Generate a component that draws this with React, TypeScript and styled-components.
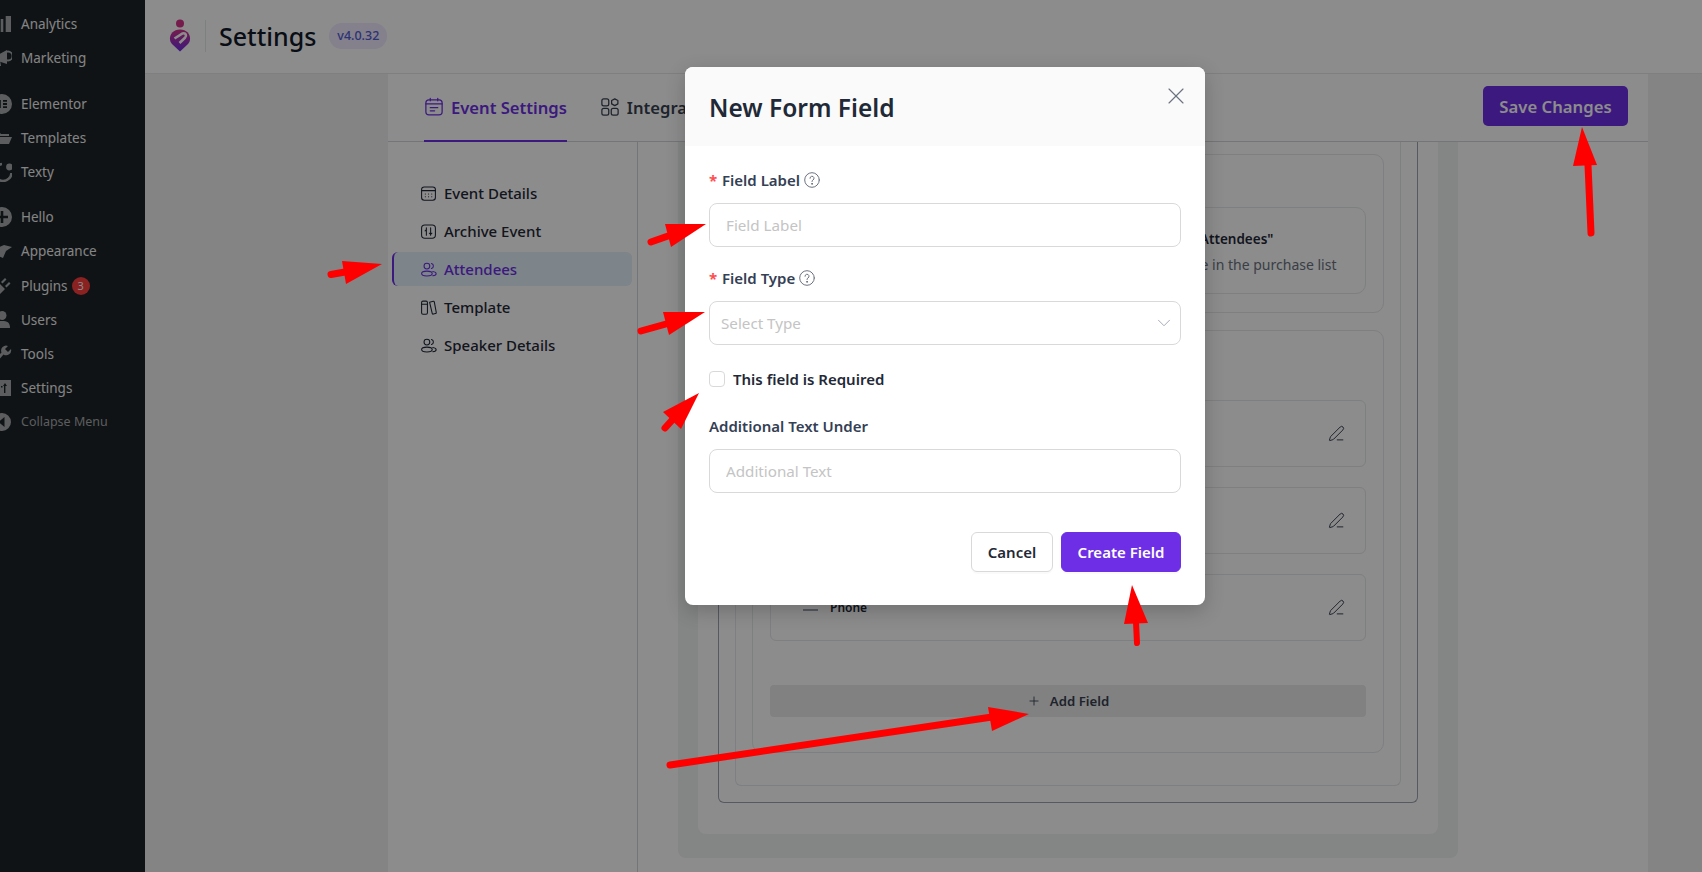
import React from 'react';
import styled, { createGlobalStyle } from 'styled-components';
import { ChevronDown, PenLine, Plus, X } from 'lucide-react';

const GlobalStyle = createGlobalStyle`
  html, body { margin: 0; padding: 0; height: 100%; overflow: hidden; }
  body { font-family: "Noto Sans", "Open Sans", sans-serif; background: #f0f0f1; color: #1f2937; }
  * { box-sizing: border-box; }
`;

const Page = styled.div`
  position: relative;
  display: flex;
  width: 1702px;
  height: 872px;
  overflow: hidden;
`;

/* admin sidebar */
const Sidebar = styled.nav`
  flex: 0 0 145px;
  background: #1d2327;
  padding-top: 7px;
  overflow: hidden;
`;

const MenuGroup = styled.div`
  margin-bottom: 10.8px;
  &:first-child { margin-bottom: 12px; }
`;

const MenuRow = styled.div<{ $muted?: boolean }>`
  display: flex;
  align-items: center;
  gap: 9px;
  height: 34.1px;
  margin-left: -8px;
  font-size: ${p => (p.$muted ? '12.5px' : '13.5px')};
  color: ${p => (p.$muted ? '#a7aaad' : '#f0f0f1')};
  svg { flex: 0 0 20px; }
`;

const Badge = styled.span`
  display: flex;
  align-items: center;
  justify-content: center;
  width: 18px;
  height: 18px;
  margin-left: -5px;
  border-radius: 50%;
  background: #fb3e3e;
  color: #fff;
  font-size: 11px;
`;

const Main = styled.div`
  flex: 1;
  display: flex;
  flex-direction: column;
  min-width: 0;
`;

const TopBar = styled.header`
  flex: 0 0 74px;
  display: flex;
  align-items: center;
  padding: 0 0 2px 24px;
  background: #fff;
  border-bottom: 1px solid #e5e7eb;
`;

const LogoSlot = styled.div`
  display: flex;
  align-items: center;
  height: 32px;
  padding-right: 14px;
  margin-right: 13px;
  border-right: 1px solid #e5e7eb;
`;

const Title = styled.h1`
  margin: 0;
  font-size: 25px;
  font-weight: 500;
  color: #111827;
`;

const Version = styled.span`
  display: flex;
  align-items: center;
  justify-content: center;
  width: 58px;
  height: 26px;
  margin-left: 13px;
  border-radius: 13px;
  background: #f0e9ff;
  color: #4f5bd5;
  font-size: 12.5px;
  font-weight: 500;
`;

const Panel = styled.section`
  flex: 1;
  display: flex;
  flex-direction: column;
  width: 1260px;
  margin-left: 243px;
  background: #fff;
  min-height: 0;
`;

const TabBar = styled.div`
  flex: 0 0 68px;
  display: flex;
  align-items: stretch;
  padding: 0 20px 0 36px;
  border-bottom: 1px solid #d1d5db;
`;

const Tab = styled.div<{ $active?: boolean }>`
  display: flex;
  align-items: center;
  gap: 7px;
  margin-right: 33px;
  margin-bottom: -1px;
  font-size: 16.6px;
  font-weight: 600;
  color: ${p => (p.$active ? '#6d2ee6' : '#374151')};
  border-bottom: 2px solid ${p => (p.$active ? '#6d2ee6' : 'transparent')};
`;

const SaveButton = styled.button`
  align-self: flex-start;
  width: 145px;
  height: 40px;
  margin: 12px 0 0 auto;
  border: 0;
  border-radius: 5px;
  background: #6d2ee6;
  color: #fff;
  font: 600 16.7px "Noto Sans", sans-serif;
`;

const PanelBody = styled.div`
  flex: 1;
  display: flex;
  min-height: 0;
  overflow: hidden;
`;

const SideNav = styled.aside`
  flex: 0 0 250px;
  padding: 34px 5px 0 4px;
  border-right: 1px solid #d1d5db;
  display: flex;
  flex-direction: column;
  gap: 4px;
`;

const NavItem = styled.div<{ $active?: boolean }>`
  display: flex;
  align-items: center;
  gap: 7px;
  height: 34px;
  padding-left: 26px;
  border-radius: 6px;
  font-size: 15px;
  font-weight: 500;
  color: ${p => (p.$active ? '#6d2ee6' : '#1f2937')};
  background: ${p => (p.$active ? '#e3f0fb' : 'transparent')};
  border-left: 2px solid ${p => (p.$active ? '#6d2ee6' : 'transparent')};
`;

const GreyCard = styled.div`
  flex: 0 0 780px;
  align-self: flex-start;
  height: 716px;
  margin-left: 40px;
  padding: 0 20px;
  background: #f1f2f3;
  border-radius: 0 0 8px 8px;
`;

const WhiteCard = styled.div`
  height: 692px;
  padding: 0 20px;
  background: #fff;
  border-radius: 0 0 8px 8px;
`;

const OuterFrame = styled.div`
  height: 661px;
  padding: 0 16px;
  border: 1px solid #9ca3af;
  border-top: 0;
  border-radius: 0 0 6px 6px;
`;

const InnerFrame = styled.div`
  height: 644px;
  padding: 12px 16px 0;
  border: 1px solid #e5e7eb;
  border-top: 0;
  border-radius: 0 0 6px 6px;
  display: flex;
  flex-direction: column;
  gap: 17px;
`;

const Section = styled.div<{ $top: number; $height: number }>`
  height: ${p => p.$height}px;
  padding: ${p => p.$top}px 17px 0;
  border: 1px solid #e5e7eb;
  border-radius: 10px;
`;

const OptionBox = styled.div`
  height: 87px;
  padding: 22px 0 0 273px;
  border: 1px solid #e5e7eb;
  border-radius: 10px;
  white-space: nowrap;
  overflow: hidden;
`;

const OptionTitle = styled.div`
  padding-left: 43px;
  font-size: 13.5px;
  font-weight: 600;
  color: #1f2937;
`;

const OptionHint = styled.div`
  margin-top: 7px;
  font-size: 14px;
  color: #6b7280;
`;

const FieldList = styled.div`
  display: flex;
  flex-direction: column;
  gap: 20px;
`;

const FieldRow = styled.div`
  display: flex;
  align-items: center;
  height: 67px;
  padding: 0 20px 0 32px;
  border: 1px solid #e5e7eb;
  border-radius: 6px;
`;

const DragHandle = styled.span`
  width: 15px;
  height: 2px;
  margin-top: 5px;
  margin-right: 12px;
  background: #9ca3af;
`;

const FieldName = styled.span`
  flex: 1;
  font-size: 12px;
  font-weight: 600;
  color: #1f2937;
`;

const AddField = styled.div`
  display: flex;
  align-items: center;
  justify-content: center;
  gap: 9px;
  height: 32px;
  margin-top: 44px;
  border-radius: 4px;
  background: #ebebeb;
  font-size: 13.2px;
  font-weight: 600;
  color: #374151;
`;

/* modal */
const Overlay = styled.div`
  position: absolute;
  inset: 0;
  padding: 67px 0 0 685px;
  background: rgba(0, 0, 0, 0.45);
`;

const Modal = styled.div`
  width: 520px;
  height: 538px;
  border-radius: 8px;
  background: #fff;
  overflow: hidden;
  box-shadow: 0 6px 20px rgba(0, 0, 0, 0.2);
`;

const ModalHead = styled.div`
  display: flex;
  align-items: flex-start;
  justify-content: space-between;
  height: 79px;
  padding: 22px 15px 0 24px;
  background: #fafafa;
`;

const ModalTitle = styled.h2`
  margin: 0;
  font-size: 24.5px;
  line-height: 38px;
  font-weight: 600;
  color: #1f2937;
`;

const CloseMark = styled.span`
  display: flex;
  margin-top: -7px;
  color: #6b7280;
`;

const ModalBody = styled.div`
  padding: 23px 24px 0;
`;

const Label = styled.label<{ $gap?: number }>`
  display: flex;
  align-items: center;
  gap: 4px;
  height: 22px;
  margin: ${p => p.$gap ?? 0}px 0 12px;
  font-size: 15px;
  font-weight: 600;
  color: #344054;
`;

const Star = styled.span`
  width: 9px;
  color: #ff4d4f;
  font-size: 15px;
  font-weight: 700;
`;

const TextInput = styled.input`
  display: block;
  width: 100%;
  height: 44px;
  padding: 0 16px;
  border: 1px solid #d9d9d9;
  border-radius: 8px;
  font: 15.2px "Noto Sans", sans-serif;
  &::placeholder { color: #c4c4c4; opacity: 1; }
`;

const SelectBox = styled.div`
  display: flex;
  align-items: center;
  justify-content: space-between;
  height: 44px;
  padding: 0 5px 0 11px;
  border: 1px solid #d9d9d9;
  border-radius: 8px;
  font-size: 15.2px;
  color: #c4c4c4;
`;

const CheckRow = styled.div`
  display: flex;
  align-items: center;
  gap: 8px;
  height: 22px;
  margin: 23px 0 25px;
  font-size: 15px;
  font-weight: 600;
  color: #1f2937;
`;

const CheckBox = styled.span`
  width: 16px;
  height: 16px;
  border: 1px solid #d9d9d9;
  border-radius: 4px;
  background: #fff;
`;

const Actions = styled.div`
  display: flex;
  justify-content: flex-end;
  gap: 8px;
  margin-top: 39px;
`;

const ActionButton = styled.button<{ $primary?: boolean }>`
  height: 40px;
  width: ${p => (p.$primary ? '120px' : '82px')};
  border: 1px solid ${p => (p.$primary ? '#6d2ee6' : '#d9d9d9')};
  border-radius: 6px;
  background: ${p => (p.$primary ? '#6d2ee6' : '#fff')};
  color: ${p => (p.$primary ? '#fff' : '#1f2937')};
  font: 600 15px "Noto Sans", sans-serif;
  box-shadow: 0 2px 0 rgba(0, 0, 0, 0.02);
`;

/* the red marks somebody drew on the screenshot */
const Annotations = styled.svg`
  position: absolute;
  inset: 0;
  pointer-events: none;
`;

const Line = (p: React.SVGProps<SVGPathElement>) => (
  <path fill="none" stroke="currentColor" strokeLinecap="round" strokeLinejoin="round" {...p} />
);

const adminIcons: Record<string, React.ReactNode> = {
  analytics: <><rect x="8.7" y="5" width="2.6" height="13" /><rect x="13.7" y="2" width="5.3" height="16" /></>,
  marketing: <><path d="M2 9 15 2v14L2 12z" /><path d="M4 12h4l1 6H6z" /><circle cx="16" cy="8" r="4.5" fill="none" stroke="#a7aaad" strokeWidth="1.8" /></>,
  elementor: <path fillRule="evenodd" d="M10 0a10 10 0 1 1 0 20 10 10 0 0 1 0-20zM7 6v8h1.8V6zm4 0v1.7h4V6zm0 3.1v1.8h4V9.1zm0 3.2V14h4v-1.7z" />,
  templates: <path d="M1 4h6l2 2h8v2H5l-3 8H1zM6 9h14l-3 7H3z" />,
  texty: <><path d="M10 2A8.500 8.500 0 1 0 19.500 11" fill="none" stroke="#a7aaad" strokeWidth="2.600" /><circle cx="17.500" cy="5" r="3.400" /></>,
  hello: <path fillRule="evenodd" d="M10 0a10 10 0 1 1 0 20 10 10 0 0 1 0-20zM8.700 4v4.700H4v2.600h4.700V16h2.600v-4.700H16V8.700H11.300V4z" />,
  appearance: <path d="M3 8 12 4l8 2-6 4-3 7-5-2-2-4zM12 5l5 2" />,
  plugins: <path d="M2 18l2-3-2-3 5-5 6 6-5 5-3-2zM9 6l4-4 1.500 1.500-4 4zM13 10l4-4 1.500 1.500-4 4z" />,
  users: <><circle cx="10" cy="5.500" r="4.500" /><path d="M2 18c0-6 3-7 8-7s8 1 8 7z" /></>,
  tools: <path d="M4 19 1.500 16.500l8-8A5 5 0 0 1 16 2l-3 3 3 3 3-3a5 5 0 0 1-7.500 5.500z" />,
  settings: <path fillRule="evenodd" d="M1 2h18v16H1zM7.500 8l-2-3-2 3h1.300v7h1.400V8zm4.500 0v7h1.400V8H15l-2-3-2 3zM9 8v1.500h1.500V8z" />,
  collapse: <path fillRule="evenodd" d="M10 1a9 9 0 1 1 0 18 9 9 0 0 1 0-18zm2.500 4-6 5 6 5z" />,
};

const AdminIcon = ({ name }: { name: string }) => (
  <svg width="20" height="20" viewBox="0 0 20 20" fill="#a7aaad">{adminIcons[name]}</svg>
);

const Glyph = ({ children, size = 16 }: { children: React.ReactNode; size?: number }) => (
  <svg width={size} height={size} viewBox="0 0 16 16" fill="none" stroke="currentColor" strokeWidth="1" strokeLinecap="round" strokeLinejoin="round">
    {children}
  </svg>
);

const PeopleGlyph = () => (
  <Glyph size={17}>
    <circle cx="6.500" cy="4.800" r="2.700" />
    <ellipse cx="6.500" cy="11.800" rx="5" ry="2.300" />
    <path d="M10.800 2.300a2.500 2.500 0 0 1 0 4.800M12 9.900c2 .3 3.200 1 3.200 2s-1.200 1.700-3.200 2" />
  </Glyph>
);

const Logo = () => (
  <svg width="22" height="33" viewBox="0 0 22 33">
    <defs>
      <linearGradient id="logoFill" x1="0" y1="0" x2="0" y2="1">
        <stop offset="0" stopColor="#d6338c" />
        <stop offset="1" stopColor="#6d2ee6" />
      </linearGradient>
    </defs>
    <circle cx="11" cy="4.500" r="4" fill="#d6338c" />
    <path d="M11 32.500 3 25C-1.500 20 1.500 10.500 11 10.500S23.500 20 19 25z" fill="url(#logoFill)" />
    <path d="M5.500 19.500 13.500 14.500c3.500-1 4.500 2.500 2.500 4.300L10.500 24" fill="none" stroke="#fff" strokeWidth="2.600" />
  </svg>
);

const QuestionMark = () => (
  <svg width="16" height="16" viewBox="0 0 16 16" fill="none" stroke="#6b7280" strokeLinecap="round">
    <circle cx="8" cy="8" r="7.300" />
    <path d="M6 6.300a2 2 0 1 1 3 1.700c-.7.400-1 .8-1 1.500" />
    <circle cx="8" cy="11.800" r=".5" fill="#6b7280" />
  </svg>
);

const menu = [
  [['analytics', 'Analytics'], ['marketing', 'Marketing']],
  [['elementor', 'Elementor'], ['templates', 'Templates'], ['texty', 'Texty']],
  [['hello', 'Hello'], ['appearance', 'Appearance'], ['plugins', 'Plugins'], ['users', 'Users'], ['tools', 'Tools'], ['settings', 'Settings']],
];

const navItems = [
  {
    title: 'Event Details',
    icon: (
      <Glyph size={17}>
        <rect x="1.500" y="1.800" width="13" height="12.500" rx="2.500" />
        <path d="M1.500 5.300h13M5 8.500h.1M8 8.500h.1M11 8.500h.1M5 11h.1M8 11h.1M11 11h.1" />
      </Glyph>
    ),
  },
  {
    title: 'Archive Event',
    icon: (
      <Glyph size={17}>
        <rect x="1.500" y="1.800" width="13" height="12.500" rx="3" />
        <path d="M6 4.500v7M10 4.500v7M4.800 7.500 6 6.300M10 10.800l1.200-1.200M8.800 9.600l1.200 1.200" />
      </Glyph>
    ),
  },
  { title: 'Attendees', active: true, icon: <PeopleGlyph /> },
  {
    title: 'Template',
    icon: (
      <Glyph size={17}>
        <rect x="1.500" y="2" width="5.500" height="12.300" rx="1.300" />
        <path d="M1.500 5h5.500M9 3l3.400-.8c.5-.1 1 .2 1.100.7l1.800 9.700c.1.500-.2 1-.7 1.100l-2 .5c-.5.1-1-.2-1.100-.7z" />
      </Glyph>
    ),
  },
  { title: 'Speaker Details', icon: <PeopleGlyph /> },
];

const fields = ['', '', 'Phone'];

export default function App() {
  return (
    <>
      <GlobalStyle />
      <Page>
        <Sidebar>
          {menu.map((group, i) => (
            <MenuGroup key={i}>
              {group.map(([icon, label]) => (
                <MenuRow key={label}>
                  <AdminIcon name={icon} />
                  {label}
                  {label === 'Plugins' && <Badge>3</Badge>}
                </MenuRow>
              ))}
              {i === 2 && (
                <MenuRow $muted>
                  <AdminIcon name="collapse" />
                  Collapse Menu
                </MenuRow>
              )}
            </MenuGroup>
          ))}
        </Sidebar>

        <Main>
          <TopBar>
            <LogoSlot><Logo /></LogoSlot>
            <Title>Settings</Title>
            <Version>v4.0.32</Version>
          </TopBar>

          <Panel>
            <TabBar>
              <Tab $active>
                <Glyph size={20}>
                  <rect x="1.500" y="2.200" width="13" height="12" rx="2.500" />
                  <path d="M1.500 5.500h13M5 1v2M11 1v2M5 8.500h6M5 11h3.500" />
                </Glyph>
                Event Settings
              </Tab>
              <Tab>
                <Glyph size={20}>
                  <rect x="1.500" y="1.500" width="5.500" height="5.500" rx="1.500" />
                  <path d="M11.800 1.500l2.500 1.300v2.700l-2.500 1.400-2.500-1.400V2.800z" />
                  <rect x="1.500" y="9" width="5.500" height="5.500" rx="1.500" />
                  <rect x="9" y="9" width="5.500" height="5.500" rx="1.500" />
                </Glyph>
                Integrations
              </Tab>
              <SaveButton>Save Changes</SaveButton>
            </TabBar>

            <PanelBody>
              <SideNav>
                {navItems.map(item => (
                  <NavItem key={item.title} $active={item.active}>
                    {item.icon}
                    {item.title}
                  </NavItem>
                ))}
              </SideNav>

              <GreyCard>
                <WhiteCard>
                  <OuterFrame>
                    <InnerFrame>
                      <Section $top={52} $height={159}>
                        <OptionBox>
                          <OptionTitle>Enable "Show All Attendees"</OptionTitle>
                          <OptionHint>Show the attendee name in the purchase list</OptionHint>
                        </OptionBox>
                      </Section>
                      <Section $top={69} $height={423}>
                        <FieldList>
                          {fields.map((name, i) => (
                            <FieldRow key={i}>
                              <DragHandle />
                              <FieldName>{name}</FieldName>
                              <PenLine size={17} strokeWidth={1.25} color="#1f2937" />
                            </FieldRow>
                          ))}
                        </FieldList>
                        <AddField>
                          <Plus size={14} strokeWidth={1.5} />
                          Add Field
                        </AddField>
                      </Section>
                    </InnerFrame>
                  </OuterFrame>
                </WhiteCard>
              </GreyCard>
            </PanelBody>
          </Panel>
        </Main>

        <Overlay>
          <Modal>
            <ModalHead>
              <ModalTitle>New Form Field</ModalTitle>
              <CloseMark><X size={28} strokeWidth={1} /></CloseMark>
            </ModalHead>
            <ModalBody>
              <Label><Star>*</Star>Field Label<QuestionMark /></Label>
              <TextInput placeholder="Field Label" />
              <Label $gap={20}><Star>*</Star>Field Type<QuestionMark /></Label>
              <SelectBox>
                Select Type
                <ChevronDown size={22} strokeWidth={1} color="#9ca3af" />
              </SelectBox>
              <CheckRow>
                <CheckBox />
                This field is Required
              </CheckRow>
              <Label>Additional Text Under</Label>
              <TextInput placeholder="Additional Text" />
              <Actions>
                <ActionButton>Cancel</ActionButton>
                <ActionButton $primary>Create Field</ActionButton>
              </Actions>
            </ModalBody>
          </Modal>
        </Overlay>

        <Annotations width="1702" height="872" color="#ff0000" fill="#ff0000">
          <Line d="M331 274.500 345 272" strokeWidth="7" />
          <polygon points="342,261 382,264 346,284" />
          <Line d="M651 242 668 236" strokeWidth="7" />
          <polygon points="665,224 706,224 671,247" />
          <Line d="M641 331 666 324" strokeWidth="7" />
          <polygon points="663,312 705,312 669,335" />
          <Line d="M665 428 674 418" strokeWidth="7" />
          <polygon points="699,393 663,412 681,429" />
          <Line d="M1588 165 1591 233" strokeWidth="7" />
          <polygon points="1582,127 1573,166 1597,165" />
          <Line d="M1136 622 1137 643" strokeWidth="6" />
          <polygon points="1132,585 1124,624 1148,623" />
          <Line d="M670 765 992 717" strokeWidth="7" />
          <polygon points="1029,714 988,707 992,731" />
        </Annotations>
      </Page>
    </>
  );
}
